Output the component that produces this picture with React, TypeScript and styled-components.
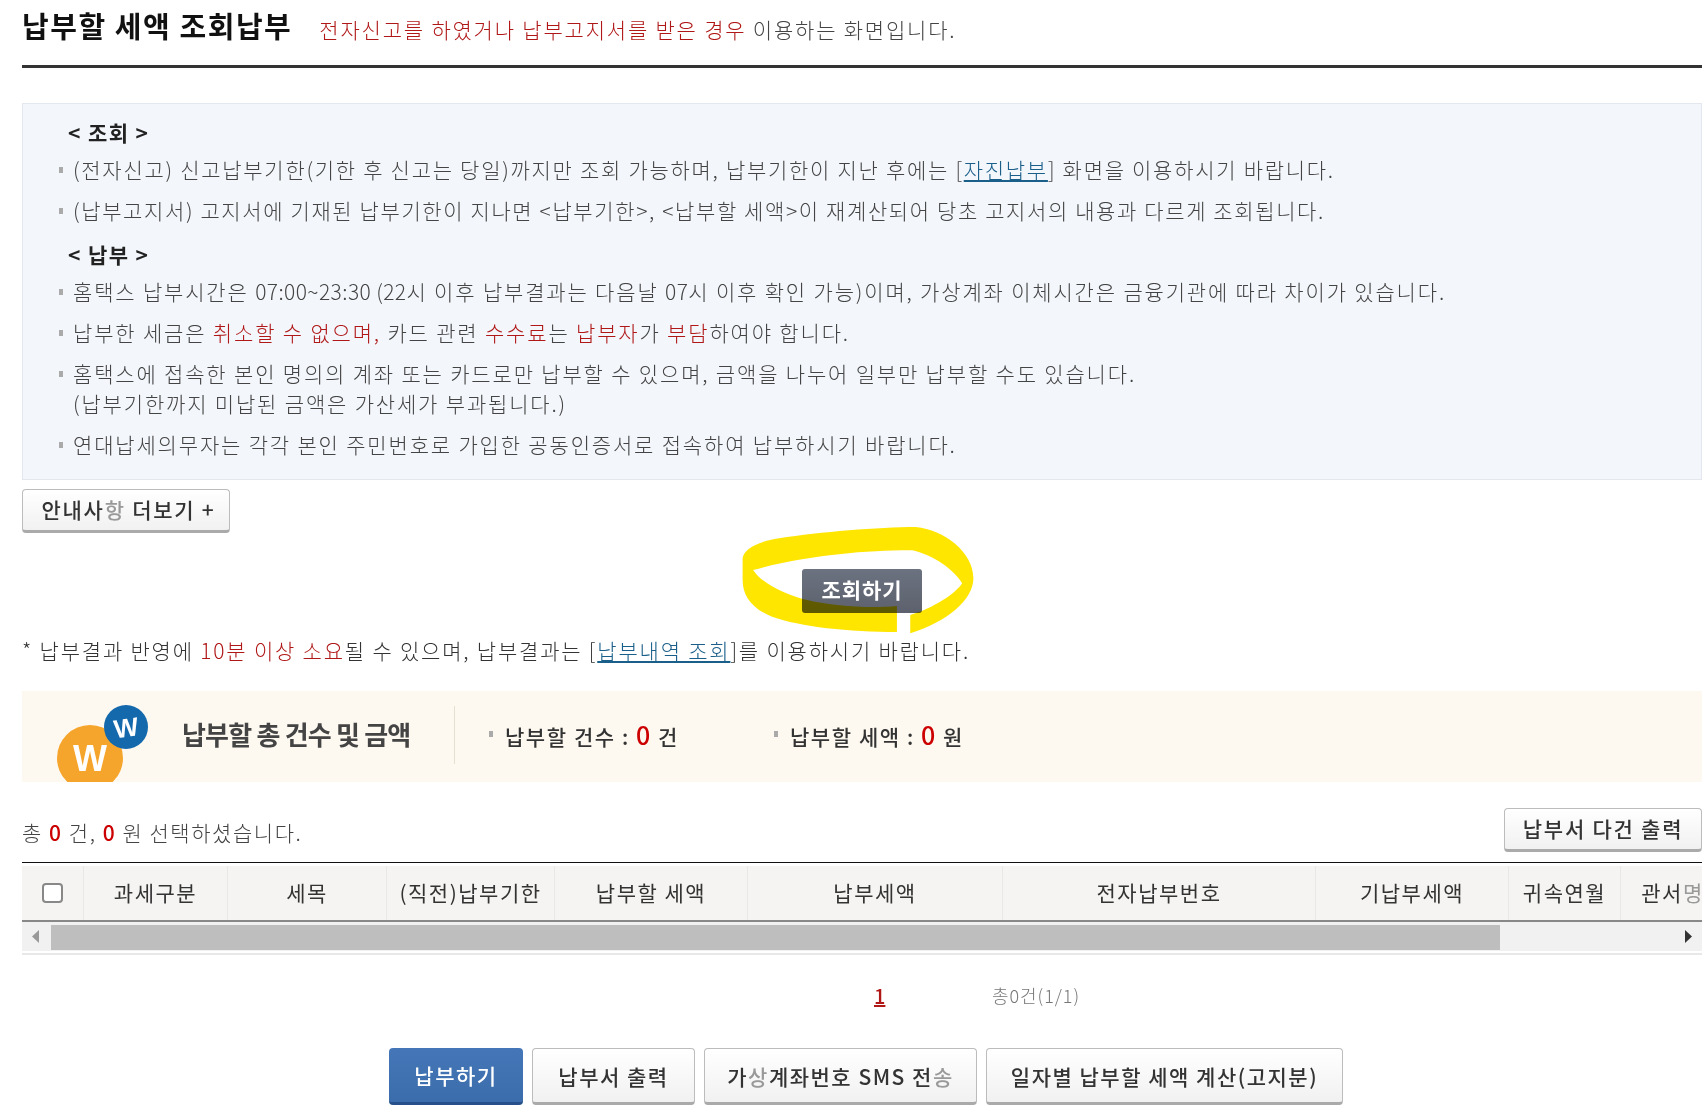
import React from 'react'
import styled, { createGlobalStyle } from 'styled-components'

const GlobalStyle = createGlobalStyle`
	html, body {
		margin: 0;
		padding: 0;
		background: #fff;
		overflow: hidden;
	}
	body {
		font-family: "Noto Sans CJK KR", "Noto Sans", sans-serif;
		color: #333;
	}
`

const Page = styled.div`
	box-sizing: border-box;
	margin-left: 22px;
	width: 1680px;
	height: 1120px;
`

const Header = styled.div`
	display: flex;
	align-items: baseline;
	gap: 27px;
	height: 65px;
	border-bottom: 3px solid #333;
`

const Title = styled.h1`
	margin: 0;
	font-size: 29px;
	line-height: 50px;
	font-weight: 700;
	color: #111;
	letter-spacing: 1.55px;
`

const Lead = styled.p`
	margin: 0;
	font-size: 21px;
	font-weight: 300;
	color: #444;
	letter-spacing: 1.8px;
`

const Red = styled.span`
	color: #b01818;
`

const Faded = styled.span`
	color: #999;
`

const Notice = styled.div`
	box-sizing: border-box;
	height: 377px;
	margin-top: 35px;
	padding: 13px 0 0 45px;
	background: #f3f6fb;
	border: 1px solid #e3e7ee;
`

const NoticeHeading = styled.h2<{ $top?: number }>`
	margin: ${(p) => p.$top ?? 0}px 0 7px;
	font-size: 21px;
	line-height: 30px;
	font-weight: 700;
	color: #222;
	letter-spacing: 1.4px;
`

const NoticeList = styled.ul`
	display: flex;
	flex-direction: column;
	gap: 11px;
	margin: 0 0 0 -9px;
	padding: 0;
	list-style: none;
`

const NoticeItem = styled.li<{ $spacing?: number }>`
	display: flex;
	gap: 10px;
	font-size: 21px;
	line-height: 30px;
	font-weight: 300;
	color: #444;
	letter-spacing: ${(p) => p.$spacing ?? 1.83}px;
`

const Bullet = styled.i`
	flex: none;
	width: 4px;
	height: 6px;
	margin-top: 13px;
	background: #aaa;
`

const Digits = styled.span`
	letter-spacing: 0.4px;
`

const TextLink = styled.a`
	color: #1a5f8a;
	text-decoration: underline;
`

const GrayButton = styled.button<{ $width: number; $height: number; $lift?: number }>`
	box-sizing: border-box;
	width: ${(p) => p.$width}px;
	height: ${(p) => p.$height}px;
	padding: 0 0 ${(p) => p.$lift ?? 0}px;
	font-family: inherit;
	font-size: 21px;
	font-weight: 500;
	color: #333;
	letter-spacing: 1.5px;
	background: linear-gradient(#fff, #f1f1f1);
	border: 1px solid #bcbcbc;
	border-bottom: 3px solid #aaa;
	border-radius: 4px;
`

const MoreButton = styled(GrayButton)`
	display: block;
	margin-top: 9px;
	padding-left: 5px;
	letter-spacing: 1.75px;
`

const PrintAllButton = styled(GrayButton)`
	letter-spacing: 1.75px;
`

const SearchRow = styled.div`
	display: flex;
	justify-content: center;
	margin-top: 36px;
`

const SearchWrap = styled.div`
	position: relative;
`

const SearchButton = styled.button`
	display: block;
	width: 120px;
	height: 44px;
	padding: 0 0 4px;
	font-family: inherit;
	font-size: 21px;
	font-weight: 700;
	color: #fff;
	letter-spacing: 0.9px;
	background: linear-gradient(#6b7280, #5d616d);
	border: 0;
	border-radius: 3px;
`

const Scribble = styled.svg`
	position: absolute;
	left: -65px;
	top: -44px;
	mix-blend-mode: multiply;
	pointer-events: none;
`

const Note = styled.p`
	margin: 22px 0 0;
	font-size: 21px;
	line-height: 30px;
	font-weight: 300;
	color: #333;
	letter-spacing: 1.8px;
`

const SummaryBand = styled.div`
	display: flex;
	align-items: center;
	height: 91px;
	margin-top: 26px;
	background: #fdf9f0;
	overflow: hidden;
`

const SummaryIcon = styled.svg`
	flex: none;
	margin-left: 30px;
`

const SummaryTitle = styled.strong`
	margin: 0 0 6px 30px;
	width: 272px;
	font-size: 26px;
	font-weight: 700;
	color: #444;
	letter-spacing: -0.8px;
`

const SummaryDivider = styled.i`
	flex: none;
	width: 1px;
	height: 58px;
	margin-bottom: 4px;
	background: #e6e0d2;
`

const SummaryStat = styled.div<{ $width: number }>`
	display: flex;
	align-items: center;
	gap: 12px;
	width: ${(p) => p.$width}px;
	font-size: 21px;
	font-weight: 500;
	color: #333;
	letter-spacing: 1.55px;
`

const SummaryBullet = styled.i`
	flex: none;
	width: 4px;
	height: 6px;
	background: #aaa;
`

const SummaryStats = styled.div`
	display: flex;
	margin: 0 0 6px 34px;
`

const Zero = styled.b`
	font-size: 25px;
	font-weight: 500;
	color: #c00;
`

const SelectedRow = styled.div`
	display: flex;
	align-items: center;
	justify-content: space-between;
	margin-top: 26px;
	height: 44px;
`

const SelectedText = styled.span`
	padding-top: 4px;
	font-size: 21px;
	font-weight: 300;
	color: #444;
	letter-spacing: 1.55px;
`

const StrongZero = styled.b`
	font-weight: 500;
	color: #c00;
`

const GridWrap = styled.div`
	margin-top: 10px;
	border-top: 1px solid #111;
	border-bottom: 2px solid #e8e8e8;
	overflow: hidden;
`

const HeadRow = styled.div<{ $columns: string }>`
	display: grid;
	grid-template-columns: ${(p) => p.$columns};
	width: max-content;
	height: 54px;
	margin-top: 3px;
	background: #f5f4f2;
	border-bottom: 2px solid #888;
`

const HeadCell = styled.div`
	display: flex;
	align-items: center;
	justify-content: center;
	padding-bottom: 2px;
	white-space: nowrap;
	font-size: 21px;
	font-weight: 400;
	color: #333;
	letter-spacing: 1.5px;
	border-right: 1px solid #e9e8e6;
`

const Check = styled.input`
	appearance: none;
	width: 21px;
	height: 20px;
	margin: 2px 0 0;
	background: #fff;
	border: 2px solid #888;
	border-radius: 4px;
`

const Scrollbar = styled.div`
	display: flex;
	align-items: center;
	height: 29px;
	background: #f1f1f1;
	border-bottom: 2px solid #fff;
`

const ScrollArrow = styled.svg`
	flex: none;
`

const ScrollThumb = styled.div`
	flex: none;
	width: 1449px;
	height: 25px;
	margin-top: 1px;
	background: #bebebe;
`

const ScrollSpace = styled.div`
	flex: 1;
`

const Pager = styled.div`
	display: flex;
	align-items: center;
	height: 30px;
	margin-top: 25px;
	padding-left: 852px;
`

const PageNumber = styled.a`
	width: 118px;
	font-size: 20px;
	font-weight: 500;
	color: #b01818;
	text-decoration: underline;
`

const PageTotal = styled.span`
	font-size: 18px;
	font-weight: 300;
	color: #777;
	letter-spacing: 0.95px;
`

const Actions = styled.div`
	display: flex;
	gap: 9px;
	margin-top: 38px;
	padding-left: 367px;
`

const PayButton = styled(GrayButton)`
	color: #fff;
	background: linear-gradient(#4577b8, #3b6cab);
	border: 0;
	border-bottom: 3px solid #25508a;
`

const columns = [
	{ label: '과세구분', width: 144 },
	{ label: '세목', width: 159 },
	{ label: '(직전)납부기한', width: 168 },
	{ label: '납부할 세액', width: 193 },
	{ label: '납부세액', width: 255 },
	{ label: '전자납부번호', width: 313 },
	{ label: '기납부세액', width: 193 },
	{ label: '귀속연월', width: 112 },
]

const columnTemplate = ['62px', ...columns.map((c) => `${c.width}px`), '104px'].join(' ')

const App: React.FC<{}> = () => {
	return (
		<Page>
			<GlobalStyle />
			<Header>
				<Title>납부할 세액 조회납부</Title>
				<Lead>
					<Red>전자신고를 하였거나 납부고지서를 받은 경우</Red> 이용하는 화면입니다.
				</Lead>
			</Header>

			<Notice>
				<NoticeHeading>&lt; 조회 &gt;</NoticeHeading>
				<NoticeList>
					<NoticeItem $spacing={1.72}>
						<Bullet />
						<span>
							(전자신고) 신고납부기한(기한 후 신고는 당일)까지만 조회 가능하며, 납부기한이 지난 후에는 [<TextLink>자진납부</TextLink>] 화면을 이용하시기 바랍니다.
						</span>
					</NoticeItem>
					<NoticeItem $spacing={1.62}>
						<Bullet />
						<span>(납부고지서) 고지서에 기재된 납부기한이 지나면 &lt;납부기한&gt;, &lt;납부할 세액&gt;이 재계산되어 당초 고지서의 내용과 다르게 조회됩니다.</span>
					</NoticeItem>
				</NoticeList>
				<NoticeHeading $top={14}>&lt; 납부 &gt;</NoticeHeading>
				<NoticeList>
					<NoticeItem>
						<Bullet />
						<span>홈택스 납부시간은 <Digits>07:00~23:30 (22</Digits>시 이후 납부결과는 다음날 <Digits>07</Digits>시 이후 확인 가능)이며, 가상계좌 이체시간은 금융기관에 따라 차이가 있습니다.</span>
					</NoticeItem>
					<NoticeItem>
						<Bullet />
						<span>
							납부한 세금은 <Red>취소할 수 없으며,</Red> 카드 관련 <Red>수수료</Red>는 <Red>납부자</Red>가 <Red>부담</Red>하여야 합니다.
						</span>
					</NoticeItem>
					<NoticeItem>
						<Bullet />
						<span>
							홈택스에 접속한 본인 명의의 계좌 또는 카드로만 납부할 수 있으며, 금액을 나누어 일부만 납부할 수도 있습니다.
							<br />
							(납부기한까지 미납된 금액은 가산세가 부과됩니다.)
						</span>
					</NoticeItem>
					<NoticeItem>
						<Bullet />
						<span>연대납세의무자는 각각 본인 주민번호로 가입한 공동인증서로 접속하여 납부하시기 바랍니다.</span>
					</NoticeItem>
				</NoticeList>
			</Notice>

			<MoreButton $width={208} $height={44} $lift={3}>
				안내사<Faded>항</Faded> 더보기 +
			</MoreButton>

			<SearchRow>
				<SearchWrap>
					<SearchButton>조회하기</SearchButton>
					<Scribble width="242" height="110" viewBox="1050 135 345 330" preserveAspectRatio="none">
						<path
							fill="#ffe600"
							d="M1058 235 C1060 205 1080 185 1110 175 C1170 155 1250 142 1305 141 C1345 150 1387 215 1387 295 C1387 360 1350 425 1297 460 L1297 405 C1330 385 1362 340 1371 310 C1360 270 1330 225 1300 211 C1240 210 1150 225 1073 270 C1085 310 1120 345 1150 360 C1190 380 1240 385 1278 378 L1278 456 C1210 456 1140 440 1100 410 C1070 385 1058 345 1058 300 Z"
						/>
					</Scribble>
				</SearchWrap>
			</SearchRow>

			<Note>
				* 납부결과 반영에 <Red>10분 이상 소요</Red>될 수 있으며, 납부결과는 [<TextLink>납부내역 조회</TextLink>]를 이용하시기 바랍니다.
			</Note>

			<SummaryBand>
				<SummaryIcon width="100" height="91" viewBox="0 0 100 91">
					<circle cx="38" cy="67" r="33" fill="#f6a52c" />
					<circle cx="74" cy="36" r="22" fill="#1469ad" />
					<text x="38" y="80" textAnchor="middle" fontFamily="Liberation Sans" fontSize="36" fontWeight="700" fill="#fff">W</text>
					<text x="74" y="46" textAnchor="middle" fontFamily="Liberation Sans" fontSize="26" fontWeight="700" fill="#fff" transform="rotate(-8 74 36)">W</text>
				</SummaryIcon>
				<SummaryTitle>납부할 총 건수 및 금액</SummaryTitle>
				<SummaryDivider />
				<SummaryStats>
					<SummaryStat $width={285}>
						<SummaryBullet />
						<span>납부할 건수 : <Zero>0</Zero> 건</span>
					</SummaryStat>
					<SummaryStat $width={200}>
						<SummaryBullet />
						<span>납부할 세액 : <Zero>0</Zero> 원</span>
					</SummaryStat>
				</SummaryStats>
			</SummaryBand>

			<SelectedRow>
				<SelectedText>
					총 <StrongZero>0</StrongZero> 건, <StrongZero>0</StrongZero> 원 선택하셨습니다.
				</SelectedText>
				<PrintAllButton $width={198} $height={44} $lift={2}>납부서 다건 출력</PrintAllButton>
			</SelectedRow>

			<GridWrap>
				<HeadRow $columns={columnTemplate}>
					<HeadCell>
						<Check type="checkbox" />
					</HeadCell>
					{columns.map((c) => (
						<HeadCell key={c.label}>{c.label}</HeadCell>
					))}
					<HeadCell>
						관서<Faded>명</Faded>
					</HeadCell>
				</HeadRow>
				<Scrollbar>
					<ScrollArrow width="29" height="29" viewBox="0 0 29 29">
						<path d="M17 8 L10 14.5 L17 21 Z" fill="#999" />
					</ScrollArrow>
					<ScrollThumb />
					<ScrollSpace />
					<ScrollArrow width="29" height="29" viewBox="0 0 29 29">
						<path d="M12 8 L19 14.5 L12 21 Z" fill="#333" />
					</ScrollArrow>
				</Scrollbar>
			</GridWrap>

			<Pager>
				<PageNumber>1</PageNumber>
				<PageTotal>총0건(1/1)</PageTotal>
			</Pager>

			<Actions>
				<PayButton $width={134} $height={57}>납부하기</PayButton>
				<GrayButton $width={163} $height={57}>납부서 출력</GrayButton>
				<GrayButton $width={273} $height={57}>
					가<Faded>상</Faded>계좌번호 SMS 전<Faded>송</Faded>
				</GrayButton>
				<GrayButton $width={357} $height={57}>일자별 납부할 세액 계산(고지분)</GrayButton>
			</Actions>
		</Page>
	)
}

export default App
